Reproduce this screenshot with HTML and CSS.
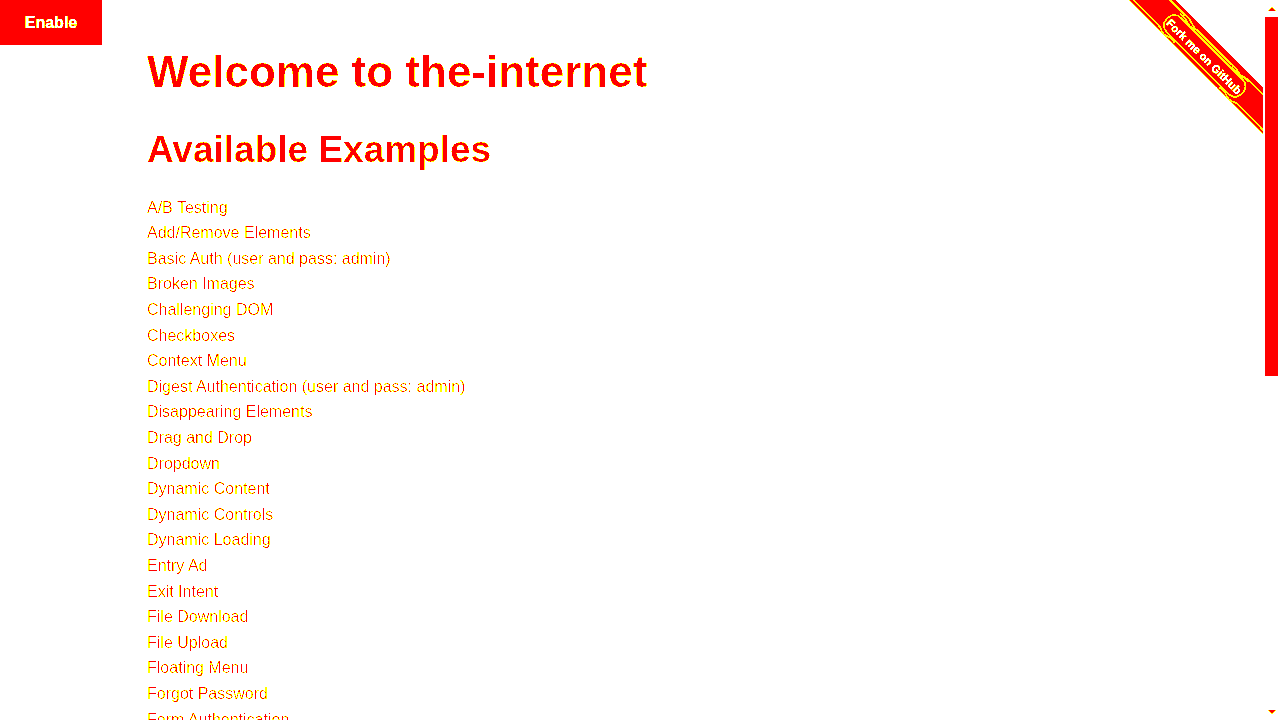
FILE: index.html
```html
<!DOCTYPE html>
<html lang="en">
<head>
    <meta charset="UTF-8">
    <title>The Internet</title>
    <link rel="stylesheet" href="styles.css">
</head>
<body>
    <svg class="defs" width="0" height="0">
        <filter id="posterize" color-interpolation-filters="sRGB" x="0" y="0" width="100%" height="100%">
            <feComponentTransfer>
                <feFuncR type="discrete" tableValues="0 1 1 1 1 1 1 1"/>
                <feFuncG type="discrete" tableValues="0 1 1 1 1 1 1 1"/>
                <feFuncB type="discrete" tableValues="0 0 0 0 1 1 1 1"/>
            </feComponentTransfer>
        </filter>
    </svg>
    <div class="shell">
        <div class="page">
            <a class="enable" href="#">Enable</a>
            <a class="ribbon" href="#">
                <svg width="134" height="134" viewBox="0 0 134 134">
                    <g transform="rotate(45)">
                        <rect class="band" x="-40" y="-33" width="240" height="33"/>
                        <path class="stitch" d="M-10 -3 H34 q5 -1 9 1 q6 3 11 0 q4 -2 8 0 M126 -2 q5 -2 9 0 q6 3 11 0 q4 -2 9 -1 H200"/>
                        <path class="stitch" d="M-10 -29 H50 q6 -1 10 1 q6 2 12 1 H118 q6 -1 12 1 q6 1 10 -2 H200"/>
                        <path class="stitch" d="M46 -26.500 q6 -1 10 1 q6 2 12 0 M120 -25.500 q6 2 12 0 q4 -2 10 -1"/>
                        <rect class="badge" x="40" y="-24" width="106" height="20" rx="9"/>
                        <text class="ribbon-text" x="93" y="-9" text-anchor="middle">Fork me on GitHub</text>
                    </g>
                </svg>
            </a>
            <div class="row">
                <h1 class="heading">Welcome to the-internet</h1>
                <h2 class="subheading">Available Examples</h2>
                <ul class="examples">
                    <li><a href="#">A/B Testing</a></li>
                    <li><a href="#">Add/Remove Elements</a></li>
                    <li><a href="#">Basic Auth (user and pass: admin)</a></li>
                    <li><a href="#">Broken Images</a></li>
                    <li><a href="#">Challenging DOM</a></li>
                    <li><a href="#">Checkboxes</a></li>
                    <li><a href="#">Context Menu</a></li>
                    <li><a href="#">Digest Authentication (user and pass: admin)</a></li>
                    <li><a href="#">Disappearing Elements</a></li>
                    <li><a href="#">Drag and Drop</a></li>
                    <li><a href="#">Dropdown</a></li>
                    <li><a href="#">Dynamic Content</a></li>
                    <li><a href="#">Dynamic Controls</a></li>
                    <li><a href="#">Dynamic Loading</a></li>
                    <li><a href="#">Entry Ad</a></li>
                    <li><a href="#">Exit Intent</a></li>
                    <li><a href="#">File Download</a></li>
                    <li><a href="#">File Upload</a></li>
                    <li><a href="#">Floating Menu</a></li>
                    <li><a href="#">Forgot Password</a></li>
                    <li><a href="#">Form Authentication</a></li>
                </ul>
            </div>
        </div>
        <div class="scrollbar">
            <div class="scroll-btn"><span class="arrow-up"></span></div>
            <div class="scroll-track"><div class="scroll-thumb"></div></div>
            <div class="scroll-btn"><span class="arrow-down"></span></div>
        </div>
    </div>
</body>
</html>
```

FILE: styles.css
```css
body {
    font-family: "Liberation Sans", Arial, sans-serif;
    font-size: 16px;
    line-height: 1.6;
    color: #f00;
    background-color: #fff;
    margin: 0;
    padding: 0;
}

.defs {
    position: absolute;
}

a {
    color: #f00;
    text-decoration: none;
}

.shell {
    display: flex;
    height: 720px;
    overflow: hidden;
    background-color: #fff;
    filter: url(#posterize);
}

.page {
    position: relative;
    flex: 1;
    min-width: 0;
}

.scrollbar {
    display: flex;
    flex-direction: column;
    width: 13px;
    padding-right: 2px;
}

.scroll-btn {
    display: flex;
    align-items: center;
    justify-content: center;
    height: 17px;
}

.arrow-up,
.arrow-down {
    width: 0;
    height: 0;
    border-left: 4px solid transparent;
    border-right: 4px solid transparent;
}

.arrow-up {
    border-bottom: 4px solid #f00;
}

.arrow-down {
    border-top: 4px solid #f00;
}

.scroll-track {
    flex: 1;
}

.scroll-thumb {
    height: 359px;
    background-color: #f00;
}

.enable {
    position: absolute;
    top: 0;
    left: 0;
    width: 102px;
    height: 45px;
    line-height: 45px;
    text-align: center;
    font-weight: bold;
    color: #fff;
    background-color: #f00;
}

.ribbon {
    position: absolute;
    top: 0;
    right: 2px;
    width: 134px;
    height: 134px;
}

.band {
    fill: #f00;
}

.stitch,
.badge {
    fill: none;
    stroke: #ff0;
    stroke-width: 1;
}

.ribbon-text {
    font-size: 11.200px;
    font-weight: bold;
    fill: #fff;
}

.row {
    max-width: 1001px;
    margin: 0 auto;
    padding: 0 15px;
    box-sizing: border-box;
}

.heading {
    font-size: 44px;
    font-weight: bold;
    line-height: 1.1;
    margin: 0;
    padding-top: 48px;
}

.subheading {
    font-size: 37px;
    font-weight: bold;
    line-height: 1.1;
    margin: 0;
    padding-top: 34px;
}

.examples {
    list-style: none;
    margin: 0;
    padding: 23.600px 0 0;
}
```
